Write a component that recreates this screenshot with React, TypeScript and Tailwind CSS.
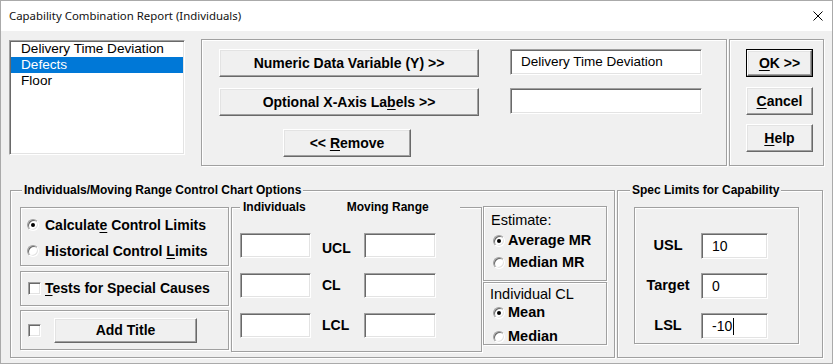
import React from "react";

const etched = "border border-[#a0a0a0] shadow-[inset_1px_1px_0_#fff,1px_1px_0_#fff]";
const raised =
  "bg-[#f0f0f0] border border-t-white border-l-white border-r-[#696969] border-b-[#696969] shadow-[inset_-1px_-1px_0_#a0a0a0,inset_1px_1px_0_#e3e3e3]";
const sunken =
  "bg-white border border-t-[#a0a0a0] border-l-[#a0a0a0] border-r-white border-b-white shadow-[inset_1px_1px_0_#696969,inset_-1px_-1px_0_#e3e3e3]";

const Btn = ({ className = "", children }: { className?: string; children: React.ReactNode }) => (
  <div className={`${raised} flex items-center justify-center font-bold text-[14px] ${className}`}>{children}</div>
);

const Radio = ({ on }: { on?: boolean }) => (
  <div className="w-[12px] h-[12px] shrink-0 rounded-full bg-white border border-t-[#a0a0a0] border-l-[#a0a0a0] border-r-white border-b-white shadow-[inset_1px_1px_0_#696969,inset_-1px_-1px_0_#e3e3e3] flex items-center justify-center">
    {on && <div className="w-[4px] h-[4px] rounded-full bg-black" />}
  </div>
);

const Check = () => <div className={`w-[13px] h-[13px] shrink-0 ${sunken}`} />;

const TextBox = ({ className = "", children }: { className?: string; children?: React.ReactNode }) => (
  <div className={`${sunken} flex items-center pl-[10px] text-[13.5px] ${className}`}>{children}</div>
);

const U = ({ children }: { children: React.ReactNode }) => <span className="underline underline-offset-2">{children}</span>;

const Legend = ({ className = "", children }: { className?: string; children: React.ReactNode }) => (
  <div className={`absolute -top-[8px] bg-[#f0f0f0] font-bold text-[12px] leading-[14px] ${className}`}>{children}</div>
);

export default function App() {
  return (
    <div className="w-[833px] h-[364px] border border-[#aaaaaa] bg-[#f0f0f0] flex flex-col overflow-hidden font-['Liberation_Sans',Arial,sans-serif] text-black">
      {/* title bar */}
      <div className="h-[30px] shrink-0 bg-white flex items-center justify-between pl-[8px] pr-[9px]">
        <span className="font-['Noto_Sans',sans-serif] text-[11.4px] text-[#111]">Capability Combination Report (Individuals)</span>
        <svg width="10" height="10" viewBox="0 0 10 10">
          <path d="M0.5 0.5L9.5 9.5M9.5 0.5L0.5 9.5" stroke="#000" strokeWidth="1" />
        </svg>
      </div>

      {/* top row */}
      <div className="flex pl-[8px] mt-[9px]">
        <div className={`${sunken} w-[176px] h-[115px] px-px text-[13.6px]`}>
          <div className="h-[16px] leading-[16px] pl-[10px]">Delivery Time Deviation</div>
          <div className="h-[16px] leading-[16px] pl-[10px] bg-[#0078d7] text-white">Defects</div>
          <div className="h-[16px] leading-[16px] pl-[10px]">Floor</div>
        </div>

        <div className={`${etched} ml-[16px] -mt-[1px] w-[526px] h-[127px] flex pl-[17px] pt-[9px]`}>
          <div className="w-[260px] flex flex-col">
            <Btn className="h-[28px]">Numeric Data Variable (Y) &gt;&gt;</Btn>
            <Btn className="h-[28px] mt-[11px]">
              Optional X-Axis La<U>b</U>els &gt;&gt;
            </Btn>
            <Btn className="h-[28px] mt-[13px] ml-[64px] w-[128px]">
              &lt;&lt;&nbsp;<U>R</U>emove
            </Btn>
          </div>
          <div className="ml-[31px] flex flex-col">
            <TextBox className="w-[192px] h-[26px]">Delivery Time Deviation</TextBox>
            <TextBox className="w-[192px] h-[26px] mt-[13px]" />
          </div>
        </div>

        <div className={`${etched} ml-[2px] -mt-[1px] w-[95px] h-[127px] flex flex-col pl-[16px] pt-[9px]`}>
          <div className="w-[67px] h-[28px] border border-black">
            <Btn className="w-full h-full">
              <U>O</U>K &gt;&gt;
            </Btn>
          </div>
          <Btn className="w-[67px] h-[28px] mt-[10px]">
            <U>C</U>ancel
          </Btn>
          <Btn className="w-[67px] h-[28px] mt-[9px]">
            <U>H</U>elp
          </Btn>
        </div>
      </div>

      {/* bottom row */}
      <div className="flex pl-[8px] mt-[24px]">
        <div className={`${etched} relative ml-[1px] w-[605px] h-[168px] flex pl-[9px] pt-[16px]`}>
          <Legend className="left-[11px] px-[2px]">Individuals/Moving Range Control Chart Options</Legend>

          <div className="w-[209px] flex flex-col">
            <div className={`${etched} h-[59px] flex flex-col pl-[6px] pt-[5px] gap-[2px] font-bold text-[14px]`}>
              <div className="h-[24px] flex items-center gap-[6px]">
                <Radio on />
                <span>
                  Calculat<U>e</U> Control Limits
                </span>
              </div>
              <div className="h-[24px] flex items-center gap-[6px]">
                <Radio />
                <span>
                  Historical Control <U>L</U>imits
                </span>
              </div>
            </div>
            <div className={`${etched} h-[35px] mt-[5px] flex items-center pl-[7px] gap-[4px] font-bold text-[14px]`}>
              <Check />
              <span>
                <U>T</U>ests for Special Causes
              </span>
            </div>
            <div className={`${etched} h-[40px] mt-[4px] flex items-center pl-[7px]`}>
              <Check />
              <Btn className="ml-[13px] w-[143px] h-[25px]">Add Title</Btn>
            </div>
          </div>

          <div className={`${etched} relative ml-[2px] w-[251px] h-[145px] flex flex-col pl-[8px] pt-[25px] gap-[15px]`}>
            <Legend className="left-[8px] pl-[3px] pr-[31px] flex gap-[41px]">
              <span>Individuals</span>
              <span>Moving Range</span>
            </Legend>
            {["UCL", "CL", "LCL"].map((l) => (
              <div key={l} className="flex items-center h-[25px]">
                <TextBox className="w-[71px] h-[25px]" />
                <span className={`w-[53px] pl-[11px] font-bold text-[14px] ${l === "UCL" ? "mt-[6px]" : ""}`}>{l}</span>
                <TextBox className="w-[72px] h-[25px]" />
              </div>
            ))}
          </div>

          <div className="ml-[1px] -mt-[1px] w-[124px] flex flex-col">
            <div className={`${etched} h-[75px] flex flex-col pl-[7px] pt-[5px]`}>
              <div className="h-[18px] flex items-center text-[14.5px]">Estimate:</div>
              <div className="h-[22px] flex items-center gap-[3px] pl-[2px] font-bold text-[14.5px]">
                <Radio on />
                <span>Average MR</span>
              </div>
              <div className="h-[22px] flex items-center gap-[3px] pl-[2px] font-bold text-[14.5px]">
                <Radio />
                <span>Median MR</span>
              </div>
            </div>
            <div className={`${etched} h-[63px] mt-[1px] flex flex-col pl-[6px] pt-[3px]`}>
              <div className="h-[18px] flex items-center text-[14.5px]">Individual CL</div>
              <div className="h-[18px] flex items-center gap-[3px] pl-[3px] font-bold text-[14.5px]">
                <Radio on />
                <span>Mean</span>
              </div>
              <div className="h-[18px] mt-[6px] flex items-center gap-[3px] pl-[3px] font-bold text-[14.5px]">
                <Radio />
                <span>Median</span>
              </div>
            </div>
          </div>
        </div>

        <div className={`${etched} relative ml-[2px] w-[206px] h-[168px] pl-[16px] pt-[16px]`}>
          <Legend className="left-[12px] px-[2px]">Spec Limits for Capability</Legend>
          <div className={`${etched} w-[165px] h-[137px] flex flex-col pt-[25px] gap-[14px]`}>
            {[
              ["USL", "10"],
              ["Target", "0"],
              ["LSL", "-10"],
            ].map(([l, v]) => (
              <div key={l} className="flex items-center h-[26px]">
                <span className="w-[66px] text-center font-bold text-[14.5px]">{l}</span>
                <TextBox className="w-[67px] h-[26px] text-[14px]">
                  {v}
                  {l === "LSL" && <span className="w-px h-[17px] bg-black ml-px" />}
                </TextBox>
              </div>
            ))}
          </div>
        </div>
      </div>
    </div>
  );
}
